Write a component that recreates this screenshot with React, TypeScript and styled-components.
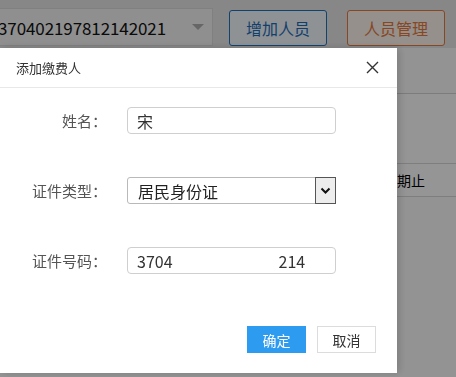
import styled, { createGlobalStyle } from 'styled-components';

const GlobalStyle = createGlobalStyle`
    html, body {
        margin: 0;
        padding: 0;
        width: 456px;
        height: 377px;
        overflow: hidden;
        background: #ffffff;
        font-family: "Noto Sans CJK SC", "Noto Sans", sans-serif;
    }
`;

const App = () => {
    return (
        <>
            <GlobalStyle />
            <Page>
                <Toolbar>
                    <IdSelect>
                        <span>370402197812142021</span>
                        <Caret />
                    </IdSelect>
                    <ToolButton tone="blue">增加人员</ToolButton>
                    <ToolButton tone="orange">人员管理</ToolButton>
                </Toolbar>
                <Table>
                    <TableRow height={70} />
                    <TableRow height={33}>
                        <Cell>期止</Cell>
                    </TableRow>
                </Table>
            </Page>
            <Overlay />
            <Dialog>
                <Header>
                    <Title>添加缴费人</Title>
                    <CloseButton aria-label="close">
                        <svg width="13" height="13" viewBox="0 0 13 13">
                            <path d="M1 1 L12 12 M12 1 L1 12" stroke="#333" strokeWidth="1.4" fill="none" />
                        </svg>
                    </CloseButton>
                </Header>
                <Body>
                    <FormRow>
                        <Label>姓名：</Label>
                        <Field>
                            <span>宋</span>
                        </Field>
                    </FormRow>
                    <FormRow>
                        <Label>证件类型：</Label>
                        <SelectField>
                            <SelectText>居民身份证</SelectText>
                            <SelectArrow>
                                <svg width="11" height="8" viewBox="0 0 11 8">
                                    <path d="M1.5 1.5 L5.5 5.5 L9.5 1.5" stroke="#111" strokeWidth="2" fill="none" />
                                </svg>
                            </SelectArrow>
                        </SelectField>
                    </FormRow>
                    <FormRow>
                        <Label>证件号码：</Label>
                        <Field>
                            <span>3704</span>
                            <Masked />
                            <span>214</span>
                        </Field>
                    </FormRow>
                </Body>
                <Footer>
                    <Button primary>确定</Button>
                    <Button>取消</Button>
                </Footer>
            </Dialog>
        </>
    );
};

// page behind the overlay
const Page = styled.div`
    width: 456px;
    height: 377px;
    background: #f6f6f6;
`;

const Toolbar = styled.div`
    display: flex;
    align-items: flex-start;
    height: 48px;
    padding-top: 8px;
    box-sizing: border-box;
    background: #e2e2e2;
`;

const IdSelect = styled.div`
    display: flex;
    align-items: center;
    justify-content: space-between;
    width: 226px;
    height: 38px;
    margin-left: -13px;
    padding: 0 8px 0 10px;
    box-sizing: border-box;
    background: #eeeeee;
    border: 1px solid #d6d6d6;
    color: #111;
    font-size: 17px;
    letter-spacing: -0.1px;
`;

const Caret = styled.div`
    width: 0;
    height: 0;
    border-left: 6px solid transparent;
    border-right: 6px solid transparent;
    border-top: 6px solid #aaa;
`;

const ToolButton = styled.div<{ tone: 'blue' | 'orange' }>`
    display: flex;
    align-items: center;
    justify-content: center;
    width: 98px;
    height: 36px;
    margin-top: 2px;
    margin-left: ${(p) => (p.tone === 'blue' ? '16px' : '20px')};
    box-sizing: border-box;
    border: 1px solid ${(p) => (p.tone === 'blue' ? '#1f6fb8' : '#e0773a')};
    border-radius: 3px;
    background: ${(p) => (p.tone === 'blue' ? '#eef3f8' : '#f8f0ea')};
    color: ${(p) => (p.tone === 'blue' ? '#1e6cb5' : '#e0773a')};
    font-size: 16px;
`;

const Table = styled.div`
    display: flex;
    flex-direction: column;
    margin-top: 45px;
    border-top: 1px solid #cfcfcf;
`;

const TableRow = styled.div<{ height: number }>`
    display: flex;
    align-items: center;
    height: ${(p) => p.height}px;
    border-bottom: 1px solid #d2d2d2;
    box-sizing: border-box;
    padding-left: 397px;
    background: #f8f8f8;
`;

const Cell = styled.div`
    color: #000;
    font-size: 14px;
`;

const Overlay = styled.div`
    position: fixed;
    inset: 0;
    background: rgba(0, 0, 0, 0.4);
`;

// dialog
const Dialog = styled.div`
    position: fixed;
    left: 0;
    top: 48px;
    width: 397px;
    height: 325px;
    display: flex;
    flex-direction: column;
    background: #ffffff;
    box-shadow: 3px 0 8px rgba(0, 0, 0, 0.15);
`;

const Header = styled.div`
    display: flex;
    align-items: center;
    justify-content: space-between;
    height: 40px;
    padding: 0 18px 0 16px;
    box-sizing: border-box;
    border-bottom: 1px solid #e8e8e8;
`;

const Title = styled.div`
    color: #333;
    font-size: 13px;
`;

const CloseButton = styled.button`
    display: flex;
    border: none;
    background: none;
    padding: 0;
    cursor: pointer;
`;

const Body = styled.div`
    display: flex;
    flex-direction: column;
    gap: 43px;
    padding-top: 19px;
`;

const FormRow = styled.div`
    display: flex;
    align-items: center;
    gap: 20px;
`;

const Label = styled.div`
    width: 107px;
    text-align: right;
    color: #555;
    font-size: 15px;
    white-space: nowrap;
`;

const Field = styled.div`
    display: flex;
    align-items: center;
    width: 209px;
    height: 27px;
    padding-left: 9px;
    box-sizing: border-box;
    border: 1px solid #cfcfcf;
    border-radius: 4px;
    color: #333;
    font-size: 16px;
`;

const Masked = styled.div`
    width: 106px;
`;

const SelectField = styled.div`
    display: flex;
    align-items: stretch;
    width: 209px;
    height: 27px;
    box-sizing: border-box;
    border: 1px solid #b9b9b9;
    border-radius: 3px 0 0 3px;
    color: #222;
    font-size: 16px;
`;

const SelectText = styled.div`
    flex: 1;
    display: flex;
    align-items: center;
    padding-left: 10px;
`;

const SelectArrow = styled.div`
    display: flex;
    align-items: center;
    justify-content: center;
    width: 19px;
    margin: -1px -1px -1px 0;
    border: 1px solid #555;
    background: #ededed;
`;

const Footer = styled.div`
    display: flex;
    justify-content: flex-end;
    gap: 11px;
    margin-top: 52px;
    padding-right: 21px;
`;

const Button = styled.div<{ primary?: boolean }>`
    display: flex;
    align-items: center;
    justify-content: center;
    width: 59px;
    height: 27px;
    box-sizing: border-box;
    border: 1px solid ${(p) => (p.primary ? '#2d9bf0' : '#dcdcdc')};
    background: ${(p) => (p.primary ? '#2d9bf0' : '#ffffff')};
    color: ${(p) => (p.primary ? '#ffffff' : '#333')};
    font-size: 14px;
`;

export default App;
